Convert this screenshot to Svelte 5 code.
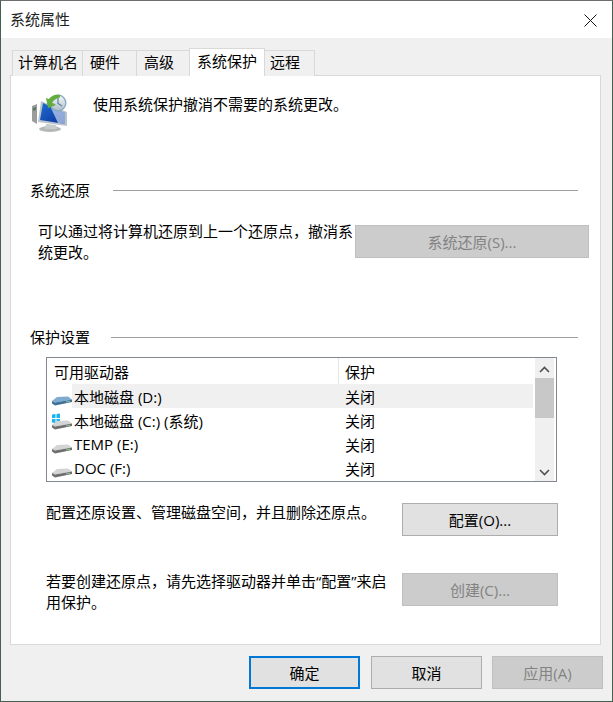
<script>
  const tabs = [
    { name: '计算机名', w: 71, pad: 5 },
    { name: '硬件', w: 54, pad: 7 },
    { name: '高级', w: 53, pad: 7 },
    { name: '系统保护', w: 76, pad: 7, active: true },
    { name: '远程', w: 50, pad: 5 }
  ];
  const drives = [
    { name: '本地磁盘 (D:)', kind: 'blue', selected: true },
    { name: '本地磁盘 (C:) (系统)', kind: 'win' },
    { name: 'TEMP (E:)', kind: 'gray' },
    { name: 'DOC (F:)', kind: 'gray' }
  ];
</script>

<div class="window">
  <header class="titlebar">
    <span>系统属性</span>
    <svg class="close" width="13" height="13" viewBox="0 0 13 13">
      <path d="M0.5 0.5 12.5 12.5M12.5 0.5 0.5 12.5" stroke="#111" stroke-width="1" fill="none" />
    </svg>
  </header>

  <div class="body">
    <div class="tabs">
      {#each tabs as tab}
        <div class="tab" class:active={tab.active} style="width: {tab.w}px; padding-left: {tab.pad}px">{tab.name}</div>
      {/each}
    </div>

    <section class="panel">
      <div class="intro">
        <svg width="38" height="38" viewBox="0 0 38 38">
          <defs>
            <linearGradient id="screen" x1="0" y1="0" x2="1" y2="1">
              <stop offset="0" stop-color="#1f6fd0" />
              <stop offset="1" stop-color="#0a2f9c" />
            </linearGradient>
            <linearGradient id="face" x1="0" y1="0" x2="0" y2="1">
              <stop offset="0" stop-color="#f4f8fb" />
              <stop offset="1" stop-color="#aebfcb" />
            </linearGradient>
          </defs>
          <path d="M1 12 6 10 6 30 1 27Z" fill="#9a9d9c" />
          <path d="M2 14 5 13 5 16 2 17Z" fill="#5d7d62" />
          <ellipse cx="19" cy="35" rx="11" ry="3" fill="#b5b8b8" />
          <path d="M15 30 25 31 26 35 14 35Z" fill="#c8cccc" />
          <path d="M10 7 36 18 36 32 7 28Z" fill="#b9c4cb" />
          <path d="M12 9 34 19 34 30 9 26Z" fill="url(#screen)" />
          <path d="M19 12 34 19 34 30 27 29Z" fill="#e8f1fa" opacity="0.6" />
          <circle cx="27" cy="9" r="8.500" fill="#8aa7bd" />
          <circle cx="27" cy="9" r="7.200" fill="url(#face)" />
          <path d="M27 4V9.500L31 12" stroke="#5f7f9a" stroke-width="1.200" fill="none" />
          <path d="M29 1C24 0 20 2 18 5L15 4 17 14 25 11 21 8.500C23 6 25 4.500 29 3.500Z" fill="#63ad3f" />
        </svg>
        <p>使用系统保护撤消不需要的系统更改。</p>
      </div>

      <div class="group-title restore-title"><span>系统还原</span><i></i></div>
      <div class="restore">
        <p>可以通过将计算机还原到上一个还原点，撤消系统更改。</p>
        <div class="btn disabled restore-btn">系统还原(S)...</div>
      </div>

      <div class="group-title protect-title"><span>保护设置</span><i></i></div>
      <div class="list">
        <div class="list-main">
          <div class="list-head">
            <div class="col-name">可用驱动器</div>
            <div class="col-state">保护</div>
          </div>
          {#each drives as drive}
            <div class="row">
              <svg class="drive" width="20" height="20" viewBox="0 0 20 20">
                {#if drive.kind === 'win'}
                  <path d="M0 4.500 3.500 4V8H0ZM4.500 3.900 8 3.400V8H4.500ZM0 9H3.500V13L0 12.500ZM4.500 9H8V13.600L4.500 13.100Z" fill="#19b4f0" />
                {/if}
                <path d="M0 15 5 11 16 10.500 20 13.500 3 16.500Z" fill={drive.kind === 'blue' ? '#7fabd0' : '#d4d4d4'} />
                <path d="M0 15 3 16.500 20 13.500 20 16 3 19.500 0 17.500Z" fill={drive.kind === 'blue' ? '#3f7198' : '#6f6f6f'} />
                <path d="M14 16 18 15.200" stroke="#9ed79e" stroke-width="0.800" />
              </svg>
              <div class="cell-name" class:selected={drive.selected}>{drive.name}</div>
              <div class="cell-state" class:selected={drive.selected}>关闭</div>
            </div>
          {/each}
        </div>
        <div class="scrollbar">
          <svg width="11" height="7" viewBox="0 0 11 7"><path d="M1 6 5.500 1.500 10 6" stroke="#505050" stroke-width="1.600" fill="none" /></svg>
          <div class="track"><div class="thumb"></div></div>
          <svg width="11" height="7" viewBox="0 0 11 7"><path d="M1 1 5.500 5.500 10 1" stroke="#505050" stroke-width="1.600" fill="none" /></svg>
        </div>
      </div>

      <div class="action config">
        <p>配置还原设置、管理磁盘空间，并且删除还原点。</p>
        <div class="btn">配置(O)...</div>
      </div>
      <div class="action create">
        <p>若要创建还原点，请先选择驱动器并单击“配置”来启用保护。</p>
        <div class="btn disabled">创建(C)...</div>
      </div>
    </section>

    <footer class="footer">
      <div class="btn primary">确定</div>
      <div class="btn">取消</div>
      <div class="btn disabled">应用(A)</div>
    </footer>
  </div>
</div>

<style>
  :global(body) { margin: 0; }
  .window { width: 613px; height: 702px; box-sizing: border-box; display: flex; flex-direction: column; background: #f0f0f0; border: 1px solid #44604e; border-top-color: #6e6e6e; font-family: "Open Sans", "Noto Sans CJK SC", sans-serif; font-size: 15px; color: #000; overflow: hidden; }
  p { margin: 0; }
  .titlebar { height: 37px; flex: none; background: #fff; display: flex; align-items: center; justify-content: space-between; padding: 0 15px 2px 9px; box-sizing: border-box; color: #222; }
  .close { margin-top: 3px; }
  .body { flex: 1; padding: 11px 11px 0 9px; display: flex; flex-direction: column; }
  .tabs { display: flex; height: 27px; padding-left: 2px; align-items: flex-end; position: relative; z-index: 1; margin-bottom: -1px; }
  .tab { height: 26px; box-sizing: border-box; border: 1px solid #d9d9d9; border-left-width: 0; border-bottom: 0; display: flex; align-items: center; padding-bottom: 2px; background: #f0f0f0; line-height: 1; }
  .tab:first-child { border-left-width: 1px; }
  .tab.active { height: 28px; background: #fff; border-left-width: 1px; margin-left: -1px; padding-bottom: 3px; }
  .panel { height: 570px; box-sizing: border-box; background: #fff; border: 1px solid #d9d9d9; padding: 0 22px 0 19px; }
  .intro { display: flex; align-items: flex-start; gap: 24px; padding: 18px 0 0 1px; height: 62px; box-sizing: border-box; }
  .intro p { margin-top: -2px; line-height: 24px; }
  .intro svg { flex: none; }
  .group-title { display: flex; align-items: center; gap: 23px; line-height: 20px; }
  .group-title i { flex: 1; height: 1px; background: #a0a0a0; }
  .restore-title { margin-top: 42px; }
  .protect-title { margin-top: 64px; gap: 21px; }
  .restore { display: flex; align-items: flex-start; margin: 25px -11px 0 8px; }
  .restore p { width: 317px; line-height: 21px; margin-top: -4px; }
  .btn { width: 111px; height: 33px; box-sizing: border-box; border: 1px solid #adadad; background: #e1e1e1; display: flex; align-items: center; justify-content: center; color: #000; }
  .btn.disabled { background: #cccccc; border-color: #bfbfbf; color: #838383; }
  .btn.primary { border: 2px solid #0078d7; margin-right: 1px; }
  .restore-btn { width: 234px; flex: none; }
  .list { margin: 10px 21px 0 16px; height: 125px; box-sizing: border-box; border: 1px solid #828790; display: flex; }
  .list-main { flex: 1; min-width: 0; padding-right: 2px; }
  .list-head { height: 26px; display: flex; align-items: center; }
  .col-name { width: 292px; height: 100%; box-sizing: border-box; border-right: 1px solid #e5e5e5; padding-left: 7px; display: flex; align-items: center; }
  .col-state { padding-left: 6px; }
  .row { height: 24px; display: flex; align-items: center; }
  .drive { flex: none; width: 20px; margin-left: 5px; }
  .cell-name { width: 266px; box-sizing: border-box; height: 100%; padding-left: 2px; flex: none; display: flex; align-items: center; }
  .cell-state { flex: 1; height: 100%; padding-left: 7px; display: flex; align-items: center; }
  .selected { background: #f0f0f0; }
  .scrollbar { width: 19px; flex: none; margin-right: 2px; background: #f0f0f0; display: flex; flex-direction: column; align-items: center; padding: 8px 0 5px; box-sizing: border-box; }
  .track { flex: 1; width: 100%; padding-top: 5px; }
  .thumb { height: 40px; background: #c8c8c8; }
  .action { display: flex; margin: 0 20px 0 16px; justify-content: space-between; align-items: flex-start; }
  .action .btn { width: 156px; flex: none; }
  .action p { width: 345px; line-height: 21px; }
  .config { margin-top: 21px; }
  .config p { margin-top: -1px; }
  .create { margin-top: 37px; }
  .create p { margin-top: -2px; }
  .footer { display: flex; justify-content: flex-end; gap: 10px; margin: 11px -2px 0 0; }
</style>
